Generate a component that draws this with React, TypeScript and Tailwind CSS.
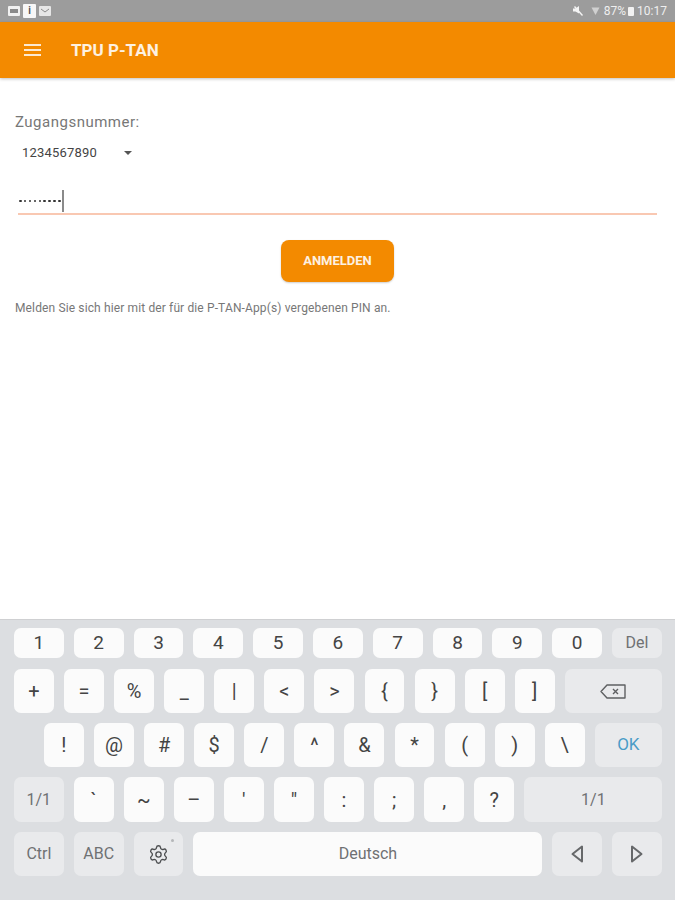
import { Settings } from "lucide-react";
import type { ReactNode } from "react";

type KeyProps = {
  w: string;
  dark?: boolean;
  className?: string;
  children: ReactNode;
};

function Key({ w, dark, className, children }: KeyProps) {
  return (
    <div
      className={`relative flex h-full shrink-0 items-center justify-center rounded-[7px] ${w} ${
        dark ? "bg-[#e9eaec] text-[#6f7173]" : "bg-[#fbfbfb] text-[#444]"
      } ${className ?? ""}`}
    >
      {children}
    </div>
  );
}

const digits = ["1", "2", "3", "4", "5", "6", "7", "8", "9", "0"];
const row2 = ["+", "=", "%", "_", "|", "<", ">", "{", "}", "[", "]"];
const row3 = ["!", "@", "#", "$", "/", "^", "&", "*", "(", ")", "\\"];
const row4 = ["`", "~", "–", "'", '"', ":", ";", ",", "?"];

function StatusBar() {
  return (
    <div className="flex h-[22px] items-center bg-[#9c9c9c] px-[8px]">
      <div className="flex items-center gap-[3px]">
        <div className="flex h-[10px] w-[12px] items-center justify-center rounded-[1px] bg-[#f1f1f1]">
          <div className="h-[4px] w-[8px] bg-[#8a8a8a]" />
        </div>
        <div className="flex h-[14px] w-[13px] items-center justify-center rounded-[1px] bg-[#f7f7f7] text-[10px] font-bold leading-none text-[#555]">
          i
        </div>
        <svg width="12" height="10" viewBox="0 0 12 10">
          <rect width="12" height="10" rx="1" fill="#e6e6e6" />
          <path d="M2 3l4 3 4-3" fill="none" stroke="#8a8a8a" strokeWidth="1" />
        </svg>
      </div>
      <div className="ml-auto flex items-center text-[12px] leading-none text-[#efefef]">
        <svg width="12" height="12" viewBox="0 0 12 12" className="mr-[7px]">
          <path d="M1 3.5h2.5L7 1v7.5L3.5 6.5H1z" fill="#f4f4f4" />
          <path d="M2.5 1.5l8 9" stroke="#f4f4f4" strokeWidth="1.4" />
        </svg>
        <svg width="9" height="10" viewBox="0 0 9 10" className="mr-[4px]">
          <path d="M0.5 1.5h8L4.5 9z" fill="#d0d0d0" />
        </svg>
        <span>87%</span>
        <div className="ml-[2px] h-[9px] w-[6px] rounded-[1px] bg-[#f2f2f2]" />
        <span className="ml-[3px]">10:17</span>
      </div>
    </div>
  );
}

function BackspaceIcon() {
  return (
    <svg width="26" height="15" viewBox="0 0 26 15" fill="none" stroke="#5e6062" strokeWidth="1.4">
      <path d="M7 1h18v13H7L1 7.5z" strokeLinejoin="round" />
      <path d="M13 5l5 5M18 5l-5 5" />
    </svg>
  );
}

function ArrowLeft() {
  return (
    <svg width="12" height="18" viewBox="0 0 12 18" fill="none" stroke="#66686a" strokeWidth="2">
      <path d="M11 1.5v15L1.5 9z" strokeLinejoin="round" />
    </svg>
  );
}

function ArrowRight() {
  return (
    <svg width="12" height="18" viewBox="0 0 12 18" fill="none" stroke="#66686a" strokeWidth="2">
      <path d="M1 1.5v15L10.5 9z" strokeLinejoin="round" />
    </svg>
  );
}

function Keyboard() {
  return (
    <div className="flex h-[281px] flex-col border-t border-[#cfd0d2] bg-[#dcdee1] pl-[14px] pt-[8px] font-['Roboto',sans-serif]">
      <div className="flex h-[30px] gap-[10px] text-[19px]">
        {digits.map((d) => (
          <Key key={d} w="w-[49.8px]">
            {d}
          </Key>
        ))}
        <Key w="w-[49.8px]" dark className="text-[16px]">
          Del
        </Key>
      </div>

      <div className="mt-[11px] flex h-[44px] gap-[10.2px] text-[20px]">
        {row2.map((c) => (
          <Key key={c} w="w-[39.9px]">
            {c}
          </Key>
        ))}
        <Key w="w-[97px]" dark>
          <BackspaceIcon />
        </Key>
      </div>

      <div className="mt-[10px] flex h-[44px] gap-[10.2px] pl-[30px] text-[20px]">
        {row3.map((c) => (
          <Key key={c} w="w-[39.9px]">
            {c}
          </Key>
        ))}
        <Key w="w-[67px]" dark className="text-[17px] !text-[#4a9cc7]">
          OK
        </Key>
      </div>

      <div className="mt-[10px] flex h-[45px] gap-[10.2px] text-[20px]">
        <Key w="w-[49.5px]" dark className="text-[16px]">
          1/1
        </Key>
        {row4.map((c) => (
          <Key key={c} w="w-[39.9px]">
            {c}
          </Key>
        ))}
        <Key w="w-[138px]" dark className="text-[16px]">
          1/1
        </Key>
      </div>

      <div className="mt-[10px] flex h-[44px] gap-[10px] text-[16px]">
        <Key w="w-[49.8px]" dark>
          Ctrl
        </Key>
        <Key w="w-[49.8px]" dark>
          ABC
        </Key>
        <Key w="w-[49.8px]" dark>
          <Settings size={21} strokeWidth={1.5} className="text-[#4c4e50]" />
          <div className="absolute right-[9px] top-[7px] h-[3px] w-[3px] rounded-full bg-[#b5b7b9]" />
        </Key>
        <Key w="w-[349px]" className="!text-[#6f7173]">
          Deutsch
        </Key>
        <Key w="w-[49.8px]" dark>
          <ArrowLeft />
        </Key>
        <Key w="w-[49.8px]" dark>
          <ArrowRight />
        </Key>
      </div>
    </div>
  );
}

export default function App() {
  return (
    <div className="flex h-[900px] w-[675px] flex-col overflow-hidden bg-white font-['Roboto',sans-serif]">
      <StatusBar />

      <header className="z-10 flex h-[56px] shrink-0 items-center bg-[#f38a00] pl-[24px] shadow-[0_1px_3px_rgba(0,0,0,0.25)]">
        <div className="-mt-[1px] flex w-[17px] flex-col gap-[3px]">
          <div className="h-[2px] bg-[#fbe9d2]" />
          <div className="h-[2px] bg-[#fbe9d2]" />
          <div className="h-[2px] bg-[#fbe9d2]" />
        </div>
        <h1 className="ml-[30px] pt-[1px] text-[17px] font-bold text-[#fdf1e2]">TPU P-TAN</h1>
      </header>

      <main className="flex-1 pt-[34px]">
        <p className="pl-[15px] text-[15px] leading-[20px] tracking-[0.5px] text-[#777]">
          Zugangsnummer:
        </p>
        <div className="mt-[11px] flex h-[20px] items-center pl-[22px] text-[13px] tracking-[0.2px] text-[#444]">
          <span className="w-[102px]">1234567890</span>
          <div className="h-0 w-0 border-x-[4px] border-t-[4px] border-x-transparent border-t-[#555]" />
        </div>
        <div className="mx-[18px] mt-[16px] h-[36px] border-b-2 border-[#f9c8b2] pt-[11px]">
          <div className="flex h-[22px] items-center">
            <div className="flex gap-[2.4px] pl-[1px]">
              {Array.from({ length: 9 }).map((_, i) => (
                <div key={i} className="h-[2.5px] w-[2.5px] rounded-full bg-[#333]" />
              ))}
            </div>
            <div className="ml-[1px] h-[22px] w-[2px] bg-[#8a8a8a]" />
          </div>
        </div>
        <div className="mt-[25px] flex justify-center">
          <button className="h-[42px] w-[113px] rounded-[8px] bg-[#f38a00] text-[13px] font-bold text-[#fdf1e2] shadow-[0_1px_2px_rgba(0,0,0,0.2)]">
            ANMELDEN
          </button>
        </div>
        <p className="mt-[19px] pl-[15px] text-[12px] leading-[14px] tracking-[0.13px] text-[#777]">
          Melden Sie sich hier mit der für die P-TAN-App(s) vergebenen PIN an.
        </p>
      </main>

      <Keyboard />
    </div>
  );
}
